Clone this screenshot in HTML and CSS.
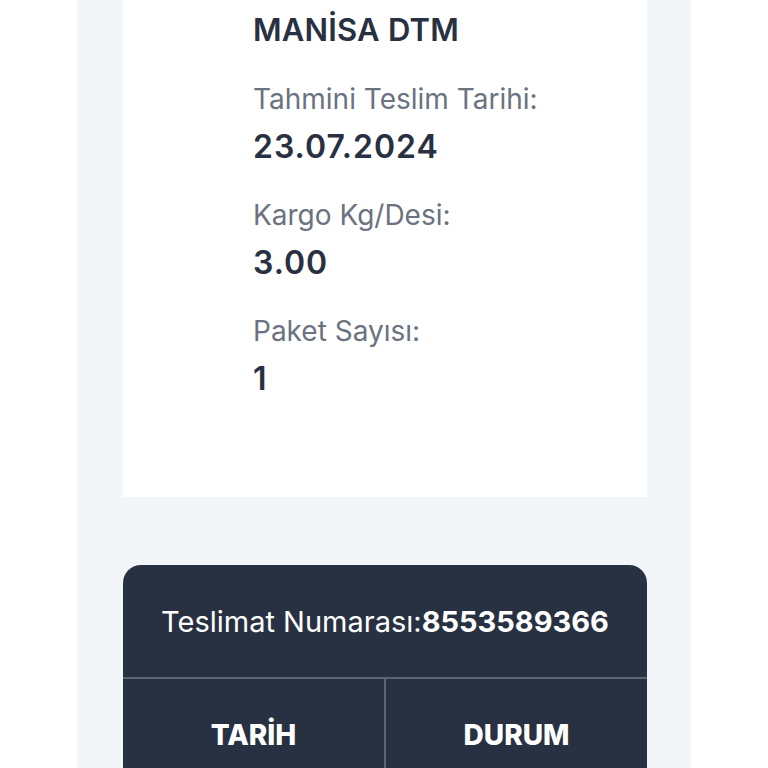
FILE: index.html
```html
<!DOCTYPE html>
<html lang="tr">
<head>
    <meta charset="UTF-8">
    <title>Kargo Takip</title>
    <link rel="stylesheet" href="styles.css">
</head>
<body>
<div class="panel">
    <div class="info-card">
        <h2 class="branch">MANİSA DTM</h2>
        <div class="field">
            <p class="label">Tahmini Teslim Tarihi:</p>
            <p class="value">23.07.2024</p>
        </div>
        <div class="field">
            <p class="label">Kargo Kg/Desi:</p>
            <p class="value">3.00</p>
        </div>
        <div class="field">
            <p class="label">Paket Sayısı:</p>
            <p class="value">1</p>
        </div>
    </div>
    <div class="track-card">
        <div class="track-number">Teslimat Numarası:<b>8553589366</b></div>
        <div class="tabs">
            <button class="tab">TARİH</button>
            <button class="tab">DURUM</button>
        </div>
    </div>
</div>
</body>
</html>
```

FILE: styles.css
```css
body {
    margin: 0;
    padding: 0;
    background-color: #fff;
    font-family: Inter, "Noto Sans", sans-serif;
    color: #283041;
}
.panel {
    width: 614px;
    margin-left: 77px;
    height: 768px;
    background-color: #f3f6f9;
    padding: 0 44px 0 46px;
    box-sizing: border-box;
    overflow: hidden;
}
.info-card {
    background-color: #fff;
    padding: 10px 0 0 130px;
    height: 497px;
    box-sizing: border-box;
}
.branch {
    margin: 0;
    font-size: 31px;
    font-weight: 600;
    line-height: 40px;
    letter-spacing: 0.2px;
}
.field {
    margin-top: 32px;
}
.field + .field {
    margin-top: 33px;
}
.label {
    margin: 0;
    font-size: 28px;
    line-height: 34px;
    color: #6b7280;
}
.value {
    margin: 13px 0 0;
    font-size: 32px;
    font-weight: 600;
    line-height: 36px;
    letter-spacing: 1px;
}
.track-card {
    margin-top: 68px;
    background-color: #283141;
    border-radius: 18px 18px 0 0;
    color: #fff;
}
.track-number {
    height: 112px;
    display: flex;
    align-items: center;
    justify-content: center;
    font-size: 29px;
    border-bottom: 2px solid #5c6573;
}
.track-number b {
    font-weight: 700;
}
.tabs {
    display: flex;
    height: 120px;
}
.tab {
    flex: 1;
    border: none;
    background: none;
    color: #fff;
    font-family: inherit;
    font-size: 28px;
    font-weight: 800;
    padding-bottom: 10px;
}
.tab + .tab {
    border-left: 2px solid #5c6573;
}
```
